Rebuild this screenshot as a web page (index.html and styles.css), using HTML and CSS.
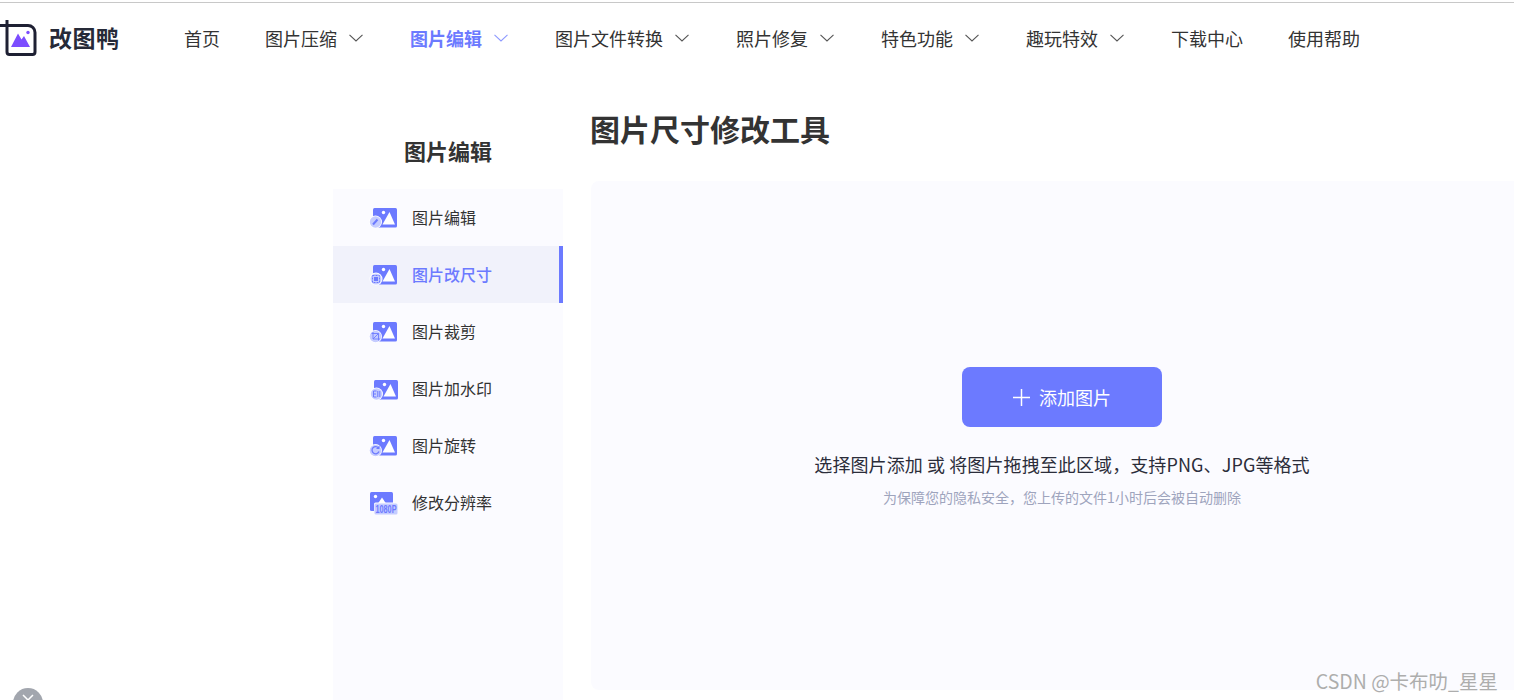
FILE: index.html
```html
<!DOCTYPE html>
<html lang="zh-CN">
<head>
<meta charset="utf-8">
<title>图片尺寸修改工具</title>
<link rel="stylesheet" href="styles.css">
</head>
<body>
<svg class="defs" width="0" height="0" aria-hidden="true">
  <symbol id="pic" viewBox="0 0 30 30">
    <rect x="4" y="5" width="24" height="19.500" rx="1.500" fill="#6c7aff"/>
    <circle cx="14.500" cy="9.500" r="1.700" fill="#fff"/>
    <path d="M13.500 21.500 L20.500 9 L26 21.500 Z" fill="#fff"/>
  </symbol>
  <symbol id="chev" viewBox="0 0 14 8">
    <path d="M0.500 0.800 L7 7 L13.500 0.800" fill="none" stroke="currentColor" stroke-width="1.100"/>
  </symbol>
</svg>

<header class="header">
  <a class="logo">
    <svg class="logo-icon" viewBox="0 0 38 38">
      <path d="M0 6.500 H28 a7 7 0 0 1 7 7 V33 a2.500 2.500 0 0 1 -2.500 2.500 H9.500 a2.500 2.500 0 0 1 -2.500 -2.500 V1" fill="none" stroke="#1e2033" stroke-width="3"/>
      <path d="M11 28 L18 14.500 L21.500 20.500 L24 17 L30 28 Z" fill="#7c4dff"/>
      <circle cx="28" cy="13.500" r="1.700" fill="#7c4dff"/>
    </svg>
    <span class="logo-text">改图鸭</span>
  </a>
  <nav class="nav">
    <a class="nav-item"><span class="nav-label">首页</span></a>
    <a class="nav-item"><span class="nav-label">图片压缩</span><svg class="chev"><use href="#chev"/></svg></a>
    <a class="nav-item active"><span class="nav-label">图片编辑</span><svg class="chev"><use href="#chev"/></svg></a>
    <a class="nav-item"><span class="nav-label">图片文件转换</span><svg class="chev"><use href="#chev"/></svg></a>
    <a class="nav-item"><span class="nav-label">照片修复</span><svg class="chev"><use href="#chev"/></svg></a>
    <a class="nav-item"><span class="nav-label">特色功能</span><svg class="chev"><use href="#chev"/></svg></a>
    <a class="nav-item"><span class="nav-label">趣玩特效</span><svg class="chev"><use href="#chev"/></svg></a>
    <a class="nav-item"><span class="nav-label">下载中心</span></a>
    <a class="nav-item"><span class="nav-label">使用帮助</span></a>
  </nav>
</header>

<main class="main">
  <aside class="side">
    <h2 class="side-title">图片编辑</h2>
    <ul class="menu">
      <li class="menu-item">
        <svg class="menu-icon" viewBox="0 0 30 30">
          <use href="#pic"/>
          <circle cx="6.500" cy="19" r="6.500" fill="#fff"/>
          <circle cx="6.500" cy="19" r="5.700" fill="#c5ccff"/>
          <path d="M4 21.500 L8.500 16.500" stroke="#6c7aff" stroke-width="2"/>
        </svg>
        <span class="menu-label">图片编辑</span>
      </li>
      <li class="menu-item current">
        <svg class="menu-icon" viewBox="0 0 30 30">
          <use href="#pic"/>
          <circle cx="7" cy="19" r="6.500" fill="#fff"/>
          <circle cx="7" cy="19" r="5.500" fill="#c5ccff"/>
          <rect x="3.500" y="15.500" width="7" height="7" fill="none" stroke="#6c7aff" stroke-width="1" stroke-dasharray="2 1"/>
          <rect x="5" y="17" width="4" height="4" fill="#6c7aff"/>
        </svg>
        <span class="menu-label">图片改尺寸</span>
      </li>
      <li class="menu-item">
        <svg class="menu-icon" viewBox="0 0 30 30">
          <use href="#pic"/>
          <circle cx="6.500" cy="19.500" r="6.500" fill="#fff"/>
          <circle cx="6.500" cy="19.500" r="5.800" fill="#c5ccff"/>
          <path d="M2.500 16.500 H9.500 V23.500 M4 15 V22 H11 M4 22 L9.500 16.500" fill="none" stroke="#6c7aff" stroke-width="0.900"/>
        </svg>
        <span class="menu-label">图片裁剪</span>
      </li>
      <li class="menu-item">
        <svg class="menu-icon" viewBox="0 0 30 30">
          <g transform="translate(1 1)">
            <use href="#pic" width="30" height="30"/>
            <circle cx="6.500" cy="19" r="6.500" fill="#fff"/>
            <circle cx="6.500" cy="19" r="5.700" fill="#c5ccff"/>
            <path d="M6.500 16 H3.500 V22 H6.500 M3.500 19 H6 M7.800 16 V22 M9.800 16 V22" fill="none" stroke="#6c7aff" stroke-width="1"/>
          </g>
        </svg>
        <span class="menu-label">图片加水印</span>
      </li>
      <li class="menu-item">
        <svg class="menu-icon" viewBox="0 0 30 30">
          <use href="#pic"/>
          <circle cx="6.500" cy="19.500" r="6.500" fill="#fff"/>
          <circle cx="6.500" cy="19.500" r="5.800" fill="#c5ccff"/>
          <path d="M9.500 17 A3.600 3.600 0 1 0 10 20.500" fill="none" stroke="#6c7aff" stroke-width="1.300"/>
          <path d="M10.500 14.500 V18 H7 Z" fill="#6c7aff"/>
        </svg>
        <span class="menu-label">图片旋转</span>
      </li>
      <li class="menu-item">
        <svg class="menu-icon" viewBox="0 0 30 30">
          <rect x="1" y="4" width="23" height="19" rx="1.500" fill="#6c7aff"/>
          <circle cx="6.500" cy="8.500" r="1.700" fill="#fff"/>
          <path d="M6 20 L13 9.500 L20 20 Z" fill="#fff"/>
          <rect x="5" y="14.500" width="24" height="12" rx="1.500" fill="#fbfbff"/>
          <rect x="5.500" y="15.500" width="23" height="11" rx="1.500" fill="#c5ccff"/>
          <text class="res-text" x="17" y="25" text-anchor="middle" textLength="21" lengthAdjust="spacingAndGlyphs">1080P</text>
        </svg>
        <span class="menu-label">修改分辨率</span>
      </li>
    </ul>
  </aside>

  <section class="content">
    <h1 class="title">图片尺寸修改工具</h1>
    <div class="panel">
      <button class="add-btn" type="button">
        <svg class="plus" viewBox="0 0 16 16"><path d="M8 0 V16 M0 8 H16" stroke="#fff" stroke-width="1.400"/></svg>
        <span class="btn-label">添加图片</span>
      </button>
      <p class="hint">选择图片添加 或 将图片拖拽至此区域，支持PNG、JPG等格式</p>
      <p class="note">为保障您的隐私安全，您上传的文件1小时后会被自动删除</p>
    </div>
  </section>
</main>

<div class="close-ball">
  <svg class="close-x" viewBox="0 0 12 12"><path d="M1 1 L11 11 M11 1 L1 11" stroke="#fff" stroke-width="1.500"/></svg>
</div>
<div class="watermark">CSDN @卡布叻_星星</div>
</body>
</html>
```
FILE: styles.css
```css
* { box-sizing: border-box; }
html, body { margin: 0; padding: 0; }
body {
  position: relative;
  height: 700px;
  overflow: hidden;
  background: #fff;
  color: #333;
  font-family: "Noto Sans CJK SC", "Liberation Sans", sans-serif;
}
.defs { position: absolute; }

.header {
  display: flex;
  align-items: center;
  height: 76px;
  background: #fff;
  background-image: linear-gradient(#fff 2px, #c8c8c8 2px, #c8c8c8 3px, #fff 3px);
}
.logo { display: flex; align-items: center; width: 184px; }
.logo-icon { width: 38px; height: 38px; margin-right: 11px; flex: none; }
.logo-text {
  padding-bottom: 3px;
  font-size: 23px;
  font-weight: 700;
  color: #262a38;
  letter-spacing: 0.5px;
}

.nav { display: flex; align-items: center; gap: 45px; }
.nav-item {
  display: flex;
  align-items: center;
  font-size: 18px;
  line-height: 26px;
  color: #333;
}
.nav-label { padding-bottom: 1px; }
.nav-item.active { color: #6c7aff; font-weight: 700; }
.chev { width: 14px; height: 8px; margin-left: 12px; margin-right: 2px; color: #555; }
.nav-item.active .chev { color: #8d99ff; }

.main { display: flex; padding-left: 333px; gap: 28px; }

.side { width: 230px; flex: none; }
.side-title {
  margin: 59px 0 24px;
  text-align: center;
  font-size: 22px;
  line-height: 30px;
  font-weight: 700;
  color: #333;
}
.menu {
  margin: 0;
  padding: 0;
  list-style: none;
  height: 520px;
  background: #fbfbff;
}
.menu-item {
  display: flex;
  align-items: center;
  gap: 13px;
  height: 57px;
  padding-left: 36px;
  font-size: 16px;
  color: #333;
}
.menu-label { padding-bottom: 2px; }
.menu-item.current {
  background: #f1f2fb;
  border-right: 4px solid #6c7aff;
  color: #6c7aff;
  font-weight: 500;
}
.menu-icon { width: 30px; height: 30px; flex: none; }
.res-text { font-size: 10px; font-weight: 700; fill: #6c7aff; font-family: "Liberation Sans", sans-serif; }

.content { width: 942px; flex: none; }
.title {
  margin: 32px 0 33px -1px;
  font-size: 30px;
  line-height: 40px;
  font-weight: 700;
  color: #333;
}
.panel {
  display: flex;
  flex-direction: column;
  align-items: center;
  height: 509px;
  padding-top: 186px;
  background: #fbfbff;
  border-radius: 8px;
}
.add-btn {
  display: flex;
  align-items: center;
  justify-content: center;
  gap: 9px;
  width: 200px;
  height: 60px;
  padding: 0;
  border: 0;
  border-radius: 8px;
  background: #6c7aff;
  color: #fff;
  font: inherit;
  font-size: 18px;
}
.btn-label { padding-bottom: 1px; }
.plus { width: 17px; height: 17px; }
.hint {
  margin: 24px 0 0;
  font-size: 18px;
  line-height: 26px;
  letter-spacing: 0.1px;
  color: #2b2d3a;
}
.note {
  margin: 11px 0 0;
  font-size: 14px;
  line-height: 18px;
  color: #9ea4bd;
}

.close-ball {
  position: absolute;
  left: 13px;
  top: 688px;
  width: 30px;
  height: 30px;
  border-radius: 50%;
  background: #a2a6ae;
  display: flex;
  justify-content: center;
  padding-top: 6px;
}
.close-x { width: 12px; height: 12px; }

.watermark {
  position: absolute;
  right: 16px;
  top: 667px;
  font-size: 19.500px;
  line-height: 28px;
  color: #adadad;
  text-shadow: 0 0 1px #fff;
}
```
